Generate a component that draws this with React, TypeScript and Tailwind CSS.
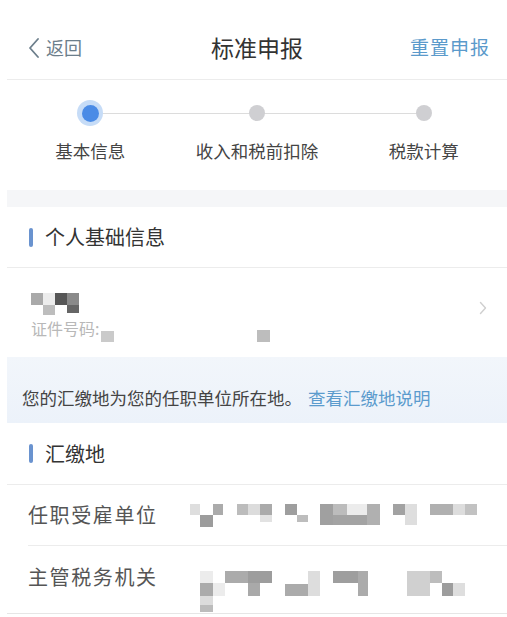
import React from "react";

type Cell = [number, number, number, number, string];

// mosaic redaction blocks, coordinates relative to their box
const nameCells: Cell[] = [
  [0, 0, 12, 12, "#a9a9a9"],
  [12, 0, 12, 12, "#ececec"],
  [12, 12, 12, 10, "#bdbdbd"],
  [24, 0, 12, 12, "#565656"],
  [36, 0, 12, 12, "#8a8a8a"],
  [36, 12, 12, 8, "#666666"],
];

const unitCells: Cell[] = [
  [0, 2, 10, 11, "#dedede"],
  [10, 13, 13, 12, "#9c9c9c"],
  [23, 2, 10, 11, "#ababab"],
  [47, 2, 11, 11, "#bcbcbc"],
  [58, 2, 12, 11, "#dcdcdc"],
  [70, 2, 12, 11, "#aaaaaa"],
  [70, 13, 12, 7, "#e2e2e2"],
  [95, 2, 12, 11, "#9e9e9e"],
  [107, 13, 11, 7, "#bdbdbd"],
  [130, 2, 13, 21, "#a0a0a0"],
  [143, 2, 14, 11, "#bcbcbc"],
  [143, 13, 34, 10, "#a3a3a3"],
  [157, 2, 20, 11, "#ececec"],
  [177, 2, 13, 21, "#b0b0b0"],
  [203, 2, 12, 11, "#a2a2a2"],
  [215, 2, 12, 21, "#dedede"],
  [240, 2, 23, 11, "#b0b0b0"],
  [263, 2, 12, 11, "#dddddd"],
  [275, 2, 12, 11, "#c2c2c2"],
];

const officeCells: Cell[] = [
  [0, 0, 13, 12, "#ececec"],
  [0, 12, 13, 13, "#ababab"],
  [0, 25, 13, 9, "#dcdcdc"],
  [0, 34, 13, 7, "#bcbcbc"],
  [13, 12, 12, 13, "#ececec"],
  [25, 0, 23, 12, "#ababab"],
  [48, 0, 24, 12, "#9d9d9d"],
  [48, 12, 12, 13, "#a9a9a9"],
  [85, 13, 23, 12, "#ababab"],
  [108, 0, 12, 25, "#dddddd"],
  [133, 0, 25, 12, "#9e9e9e"],
  [158, 0, 10, 25, "#ababab"],
  [207, 0, 23, 25, "#d0d0d0"],
  [230, 0, 12, 12, "#bdbdbd"],
  [242, 12, 11, 13, "#9d9d9d"],
  [253, 12, 12, 13, "#dedede"],
];

function Mosaic({ cells, w, h }: { cells: Cell[]; w: number; h: number }) {
  return (
    <svg width={w} height={h} viewBox={`0 0 ${w} ${h}`} className="block">
      {cells.map(([x, y, cw, ch, c], i) => (
        <rect key={i} x={x} y={y} width={cw} height={ch} fill={c} />
      ))}
    </svg>
  );
}

function SectionTitle({ title, h }: { title: string; h: string }) {
  return (
    <div className={`flex items-center border-b border-[#ececec] pl-[22px] ${h}`}>
      <span className="w-[4px] h-[19px] rounded-full bg-[#6a93cf]" />
      <span className="ml-[12px] text-[20px] text-[#333] leading-none">{title}</span>
    </div>
  );
}

export default function App() {
  const steps = ["基本信息", "收入和税前扣除", "税款计算"];

  return (
    <div
      className="w-[507px] h-[617px] bg-white overflow-hidden"
      style={{ fontFamily: '"Noto Sans CJK SC", "Noto Sans", sans-serif' }}
    >
      <div className="ml-[7px]">
        {/* Header */}
        <div className="h-[80px] grid grid-cols-[1fr_auto_1fr] items-center border-b border-[#ececec] pt-[16px]">
          <div className="flex items-center pl-[20px] text-[18px] text-[#6c7e8b]">
            <svg width="14" height="20" viewBox="0 0 14 20" className="mr-[5px]">
              <polyline
                points="11,1 3,10 11,19"
                fill="none"
                stroke="#6c7e8b"
                strokeWidth="1.8"
                strokeLinecap="round"
                strokeLinejoin="round"
              />
            </svg>
            <span>返回</span>
          </div>
          <div className="text-[23px] text-[#333]">标准申报</div>
          <div className="justify-self-end pr-[17px] text-[19px] text-[#5b9acb] tracking-[1px]">重置申报</div>
        </div>

        {/* Stepper */}
        <div className="h-[110px] pt-[20px] relative">
          <div className="absolute top-[33px] left-[83px] w-[334px] h-px bg-[#dcdcdc]" />
          <div className="relative grid grid-cols-3 w-[500px]">
            {steps.map((s, i) => (
              <div key={s} className="flex flex-col items-center">
                <div className="h-[26px] w-[26px] flex items-center justify-center">
                  {i === 0 ? (
                    <span className="w-[26px] h-[26px] rounded-full bg-[#c6dcf7] flex items-center justify-center">
                      <span className="w-[17px] h-[17px] rounded-full bg-[#4a8be6]" />
                    </span>
                  ) : (
                    <span className="w-[16px] h-[16px] rounded-full bg-[#cfcfd2]" />
                  )}
                </div>
                <span className="mt-[16px] text-[17.5px] text-[#444] leading-none whitespace-nowrap">{s}</span>
              </div>
            ))}
          </div>
        </div>

        {/* spacer band */}
        <div className="h-[17px] bg-[#f5f6f8]" />

        <SectionTitle title="个人基础信息" h="h-[61px]" />

        {/* Person row */}
        <div className="h-[89px] flex items-center justify-between pl-[24px] pr-[20px]">
          <div className="flex flex-col pt-[4px]">
            <Mosaic cells={nameCells} w={48} h={22} />
            <div className="flex items-end mt-[5px]">
              <span className="text-[16px] text-[#b8b8b8] leading-none">证件号码:</span>
              <span className="ml-[2px] mb-[-6px] w-[13px] h-[11px] bg-[#cacaca]" />
              <span className="ml-[143px] mb-[-6px] w-[13px] h-[12px] bg-[#bdbdbd]" />
            </div>
          </div>
          <svg width="8" height="14" viewBox="0 0 8 14" className="-mt-[10px]">
            <polyline
              points="1.5,1.5 6.5,7 1.5,12.5"
              fill="none"
              stroke="#cfcfcf"
              strokeWidth="1.4"
              strokeLinecap="round"
              strokeLinejoin="round"
            />
          </svg>
        </div>

        {/* Notice */}
        <div className="h-[66px] bg-gradient-to-b from-[#f2f6fb] to-[#ecf2fa] flex items-center pl-[15px] pt-[16px] text-[17.5px] leading-none">
          <span className="text-[#444]">您的汇缴地为您的任职单位所在地。</span>
          <span className="ml-[6px] text-[#5b9bcd]">查看汇缴地说明</span>
        </div>

        <SectionTitle title="汇缴地" h="h-[62px]" />

        {/* Row 1 */}
        <div className="ml-[21px] h-[61px] flex items-center border-b border-[#ececec]">
          <span className="text-[20px] text-[#555] tracking-[1.6px] w-[162px]">任职受雇单位</span>
          <Mosaic cells={unitCells} w={290} h={26} />
        </div>

        {/* Row 2 */}
        <div className="h-[68px] border-b border-[#e6e6e6]">
          <div className="ml-[21px] h-full flex items-center">
            <span className="text-[20px] text-[#555] tracking-[1.6px] w-[172px] -mt-[6px]">主管税务机关</span>
            <div className="mt-[24px]">
              <Mosaic cells={officeCells} w={268} h={42} />
            </div>
          </div>
        </div>
      </div>
    </div>
  );
}
